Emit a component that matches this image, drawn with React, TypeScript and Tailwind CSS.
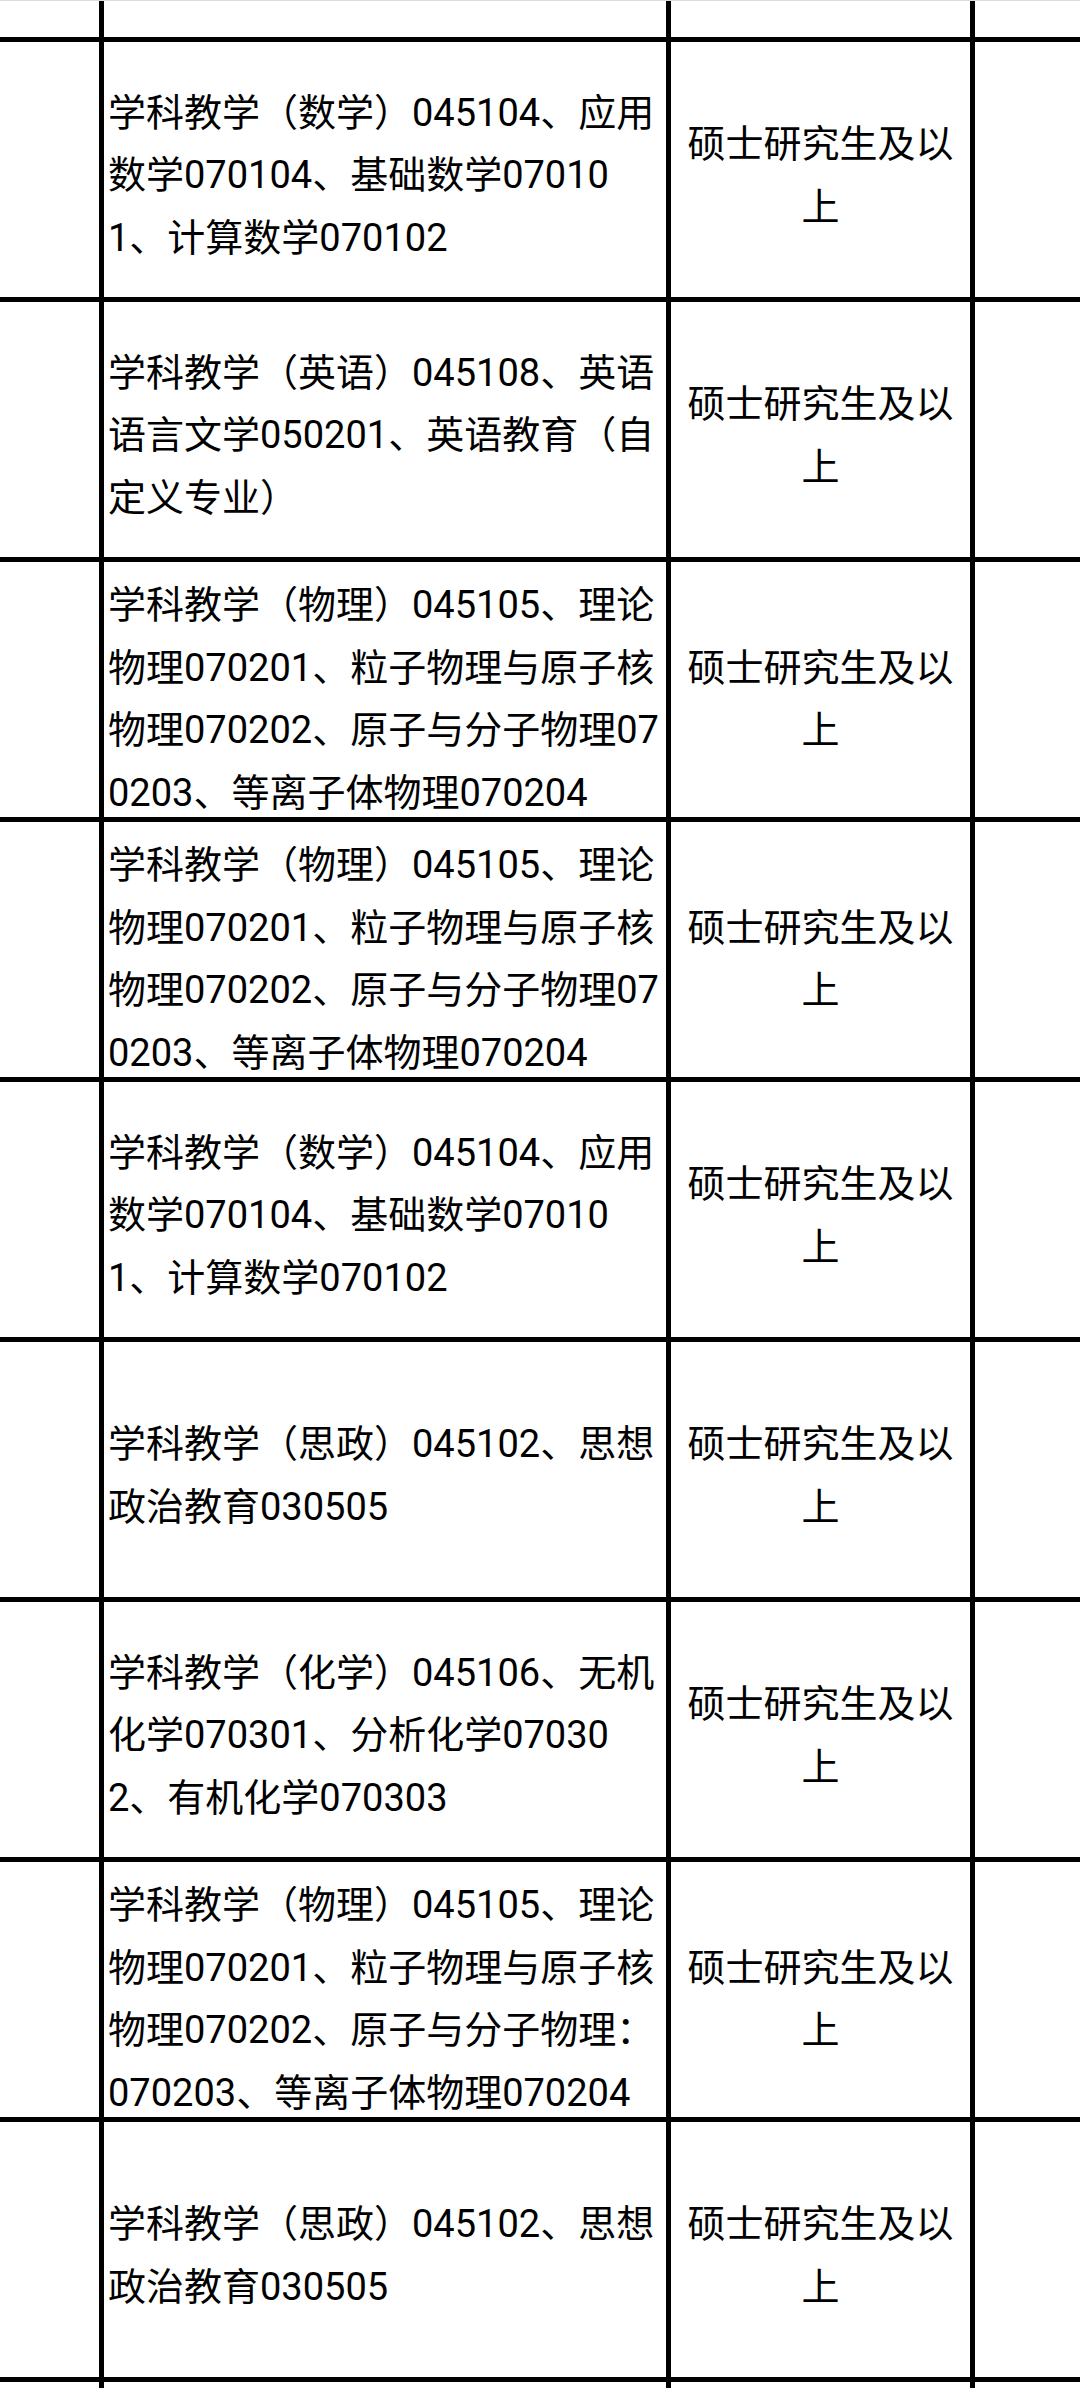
import React from 'react';

const MATH = '学科教学（数学）045104、应用数学070104、基础数学070101、计算数学070102';
const ENGLISH = '学科教学（英语）045108、英语语言文学050201、英语教育（自定义专业）';
const PHYSICS = '学科教学（物理）045105、理论物理070201、粒子物理与原子核物理070202、原子与分子物理070203、等离子体物理070204';
const POLITICS = '学科教学（思政）045102、思想政治教育030505';
const CHEMISTRY = '学科教学（化学）045106、无机化学070301、分析化学070302、有机化学070303';
const PHYSICS_COLON = '学科教学（物理）045105、理论物理070201、粒子物理与原子核物理070202、原子与分子物理：070203、等离子体物理070204';

const rows = [MATH, ENGLISH, PHYSICS, PHYSICS, MATH, POLITICS, CHEMISTRY, PHYSICS_COLON, POLITICS];

const DEGREE = '硕士研究生及以上';

function EmptyRow({ height }: { height: string }) {
  return (
    <div className={`grid grid-cols-[104px_567px_304px_105px] ${height}`}>
      <div className="border-r-[5px] border-black" />
      <div className="border-r-[5px] border-black" />
      <div className="border-r-[5px] border-black" />
      <div />
    </div>
  );
}

export default function App() {
  return (
    <div
      className="w-[1080px] min-h-[2388px] overflow-hidden bg-white text-black border-t border-[#dcdcdc]"
      style={{ fontFamily: 'Roboto, "Noto Sans CJK SC", sans-serif' }}
    >
      <EmptyRow height="h-[36px]" />

      {rows.map((text, i) => (
        <div
          key={i}
          className="grid h-[260px] grid-cols-[104px_567px_304px_105px] border-t-[5px] border-black"
        >
          <div className="border-r-[5px] border-black" />
          <div className="flex items-center border-r-[5px] border-black pl-[4px] pr-[5px] pt-[12px]">
            <p className="w-full break-all text-[38px] leading-[62.5px]">{text}</p>
          </div>
          <div className="flex items-center justify-center border-r-[5px] border-black pt-[12px]">
            <p className="w-full text-center break-all text-[38px] leading-[62.5px]">{DEGREE}</p>
          </div>
          <div />
        </div>
      ))}

      <div className="border-t-[5px] border-black">
        <EmptyRow height="h-[40px]" />
      </div>
    </div>
  );
}
